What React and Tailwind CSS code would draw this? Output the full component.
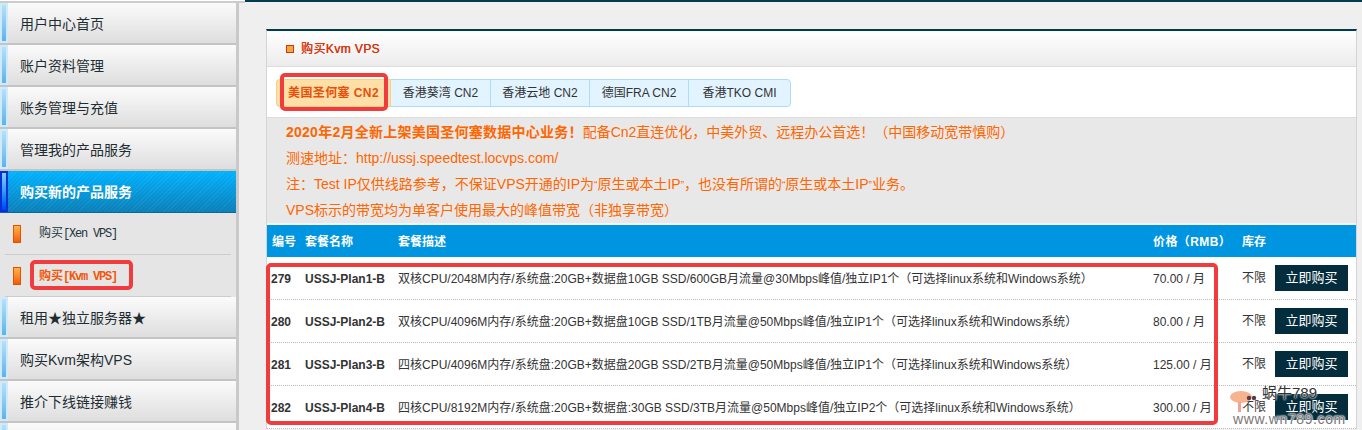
import React from 'react';

const font = "font-['Liberation_Sans','Noto_Sans_CJK_SC',sans-serif]";

const topMenu = ['用户中心首页', '账户资料管理', '账务管理与充值', '管理我的产品服务'];
const bottomMenu = ['租用★独立服务器★', '购买Kvm架构VPS', '推介下线链接赚钱', ''];

const tabs = [
  { label: '香港葵湾 CN2', width: 'w-[100px]' },
  { label: '香港云地 CN2', width: 'w-[99px]' },
  { label: '德国FRA CN2', width: 'w-[99px]' },
  { label: '香港TKO CMI', width: 'w-[101px]' },
];

const plans = [
  { id: 279, name: 'USSJ-Plan1-B', desc: '双核CPU/2048M内存/系统盘:20GB+数据盘10GB SSD/600GB月流量@30Mbps峰值/独立IP1个（可选择linux系统和Windows系统）', price: '70.00 / 月' },
  { id: 280, name: 'USSJ-Plan2-B', desc: '双核CPU/4096M内存/系统盘:20GB+数据盘10GB SSD/1TB月流量@50Mbps峰值/独立IP1个（可选择linux系统和Windows系统）', price: '80.00 / 月' },
  { id: 281, name: 'USSJ-Plan3-B', desc: '四核CPU/4096M内存/系统盘:20GB+数据盘20GB SSD/2TB月流量@50Mbps峰值/独立IP1个（可选择linux系统和Windows系统）', price: '125.00 / 月' },
  { id: 282, name: 'USSJ-Plan4-B', desc: '四核CPU/8192M内存/系统盘:20GB+数据盘:30GB SSD/3TB月流量@50Mbps峰值/独立IP2个（可选择linux系统和Windows系统）', price: '300.00 / 月' },
];

function MenuItem({ label, active }) {
  return (
    <div className={`flex items-center h-[42px] ${active ? 'bg-[repeating-linear-gradient(135deg,rgba(255,255,255,0.06)_0px,rgba(255,255,255,0.06)_1px,transparent_1px,transparent_3px),linear-gradient(to_bottom,#00b2ff,#0a7fb8)] border-b border-[#06689c]' : 'bg-gradient-to-b from-[#fbfbfb] to-[#dedede] border-b-2 border-[#c4c4c4]'}`}>
      <div className={`w-2 h-full shrink-0 border-2 ${active ? 'border-[#0a2fd8] bg-gradient-to-b from-[#7fd0f8] via-[#2f9df0] to-[#0a44ee]' : 'border-[#cfeafa] bg-gradient-to-b from-[#b5e1f8] to-[#5cb3ea]'}`} />
      <span className={`ml-3 text-sm ${active ? 'text-white font-bold' : 'pt-px text-[#1f2d33]'}`}>{label}</span>
    </div>
  );
}

function SubItem({ label, active }) {
  return (
    <div className="flex items-center h-[42px] mx-[5px] border-b border-[#cccccc]">
      <div className="ml-2 w-2 h-[18px] border border-[#e65100] bg-gradient-to-b from-[#ffb347] to-[#f25a00]" />
      <span className={`ml-[18px] text-xs ${active ? 'pt-px text-[#f4570a] font-bold' : 'text-[#26343a]'}`}>
        购买<span className="font-['Liberation_Mono',monospace] tracking-[-1.2px]">{label}</span>
      </span>
    </div>
  );
}

function Sidebar() {
  return (
    <aside className="w-[236px] shrink-0 h-full overflow-hidden bg-[#e5e5e5] border-r-[3px] border-[#c9c9c9] box-content">
      {topMenu.map(m => <MenuItem key={m} label={m} />)}
      <MenuItem label="购买新的产品服务" active />
      <SubItem label="[Xen VPS]" />
      <SubItem label="[Kvm VPS]" active />
      {bottomMenu.map((m, i) => <MenuItem key={i} label={m} />)}
    </aside>
  );
}

function PlanTable() {
  const cols = 'grid grid-cols-[38px_93px_755px_89px_33px_82px] items-center';
  return (
    <div>
      <div className={`${cols} h-[32px] pt-px bg-[#0095e0] text-white font-bold text-xs`}>
        <span className="pl-[5px]">编号</span>
        <span>套餐名称</span>
        <span>套餐描述</span>
        <span className="tracking-[0.4px]">价格（RMB）</span>
        <span>库存</span>
        <span />
      </div>
      {plans.map(p => (
        <div key={p.id} className={`${cols} h-[43px] bg-white border-b border-dotted border-[#bbbbbb] text-xs text-[#333333]`}>
          <span className="pl-[4px] pt-px font-bold">{p.id}</span>
          <span className="pt-px font-bold">{p.name}</span>
          <span className="pt-px whitespace-nowrap">{p.desc}</span>
          <span className="pt-px">{p.price}</span>
          <span>不限</span>
          <button className="w-[73px] h-[26px] bg-[#032c3c] text-white text-[13px]">立即购买</button>
        </div>
      ))}
    </div>
  );
}

function Quote({ children }) {
  return <span className="text-[10px] leading-none">{children}</span>;
}

export default function App() {
  return (
    <div className={`relative w-[1362px] h-[430px] overflow-hidden bg-[#efefef] ${font}`}>
      <div className="flex h-[3px]">
        <div className="w-[245px] bg-white border-b-2 border-[#cccccc]" />
        <div className="flex-1 h-[2px] bg-[#003c50]" />
      </div>
      <div className="flex h-[427px]">
        <Sidebar />
        <main className="flex-1 min-w-0 pl-[27px] pr-[5px] pt-[26px]">
          <div className="border-t-2 border-[#003c50] border-x border-x-[#d4d4d4] bg-white">
            <div className="flex items-center h-[36px] pl-[19px] gap-[7px] bg-gradient-to-b from-[#ffffff] to-[#ececec] border-b border-[#dddddd]">
              <span className="w-2 h-2 border border-[#d8340c] bg-[#f2a93b]" />
              <span className="text-xs tracking-[0.4px] text-[#d8340c] [text-shadow:0.3px_0_0_#d8340c]">购买Kvm VPS</span>
            </div>
            <div className="flex items-center h-[50px] pt-[2px] pl-[9px] bg-white">
              <div className="flex h-[28px] rounded border border-[#afdcf8] bg-[#e2f4ff] text-xs text-[#333333]">
                <span className="flex items-center justify-center w-[115px] -my-px -ml-px rounded-l bg-[#ffdfa8] border border-[#f8cf86] text-[#e8500a] font-bold tracking-[0.4px]">美国圣何塞 CN2</span>
                {tabs.map(t => (
                  <span key={t.label} className={`flex items-center justify-center ${t.width} border-r border-[#afdcf8] last:border-r-0`}>{t.label}</span>
                ))}
              </div>
            </div>
            <div className="h-[108px] pl-[19px] pt-px bg-[#e8e8e8] border-t border-[#dddddd] border-b-2 border-b-[#f5f5f5] text-sm leading-[26px] text-[#ff6600]">
              <p><b className="tracking-[0.25px]">2020年2月全新上架美国圣何塞数据中心业务！</b>配备Cn2直连优化，中美外贸、远程办公首选！（中国移动宽带慎购）</p>
              <p>测速地址：http://ussj.speedtest.locvps.com/</p>
              <p>注：Test IP仅供线路参考，不保证VPS开通的IP为<Quote>“</Quote>原生或本土IP<Quote>”</Quote>，也没有所谓的<Quote>“</Quote>原生或本土IP<Quote>”</Quote>业务。</p>
              <p>VPS标示的带宽均为单客户使用最大的峰值带宽（非独享带宽）</p>
            </div>
            <PlanTable />
          </div>
        </main>
      </div>

      {/* red annotation boxes */}
      <div className="absolute left-[280px] top-[73px] w-[108px] h-[38px] rounded-[5px] border-[4px] border-[#f03c3c]" />
      <div className="absolute left-[30px] top-[260px] w-[103px] h-[30px] rounded-[5px] border-[4px] border-[#f03c3c]" />
      <div className="absolute left-[266px] top-[263px] w-[952px] h-[162px] rounded-[5px] border-[4px] border-[#f03c3c]" />

      {/* watermark */}
      <div className="absolute left-[1229px] top-[385px] w-[125px] h-[45px] pointer-events-none">
        <svg width="30" height="26" viewBox="0 0 30 26" className="absolute left-0 top-[2px]">
          <ellipse cx="12" cy="10" rx="11" ry="6" fill="#f6b48e" />
          <circle cx="20" cy="11" r="2.2" fill="#5b3a4a" />
          <circle cx="25" cy="11" r="2.2" fill="#5b3a4a" />
          <rect x="9" y="15" width="3" height="10" fill="#f2a0a0" />
        </svg>
        <span className="absolute left-[33px] top-[-2px] text-[15px] leading-5 text-[#333333] [text-shadow:0_0_2px_#ffffff,0_0_2px_#ffffff]">蜗牛789</span>
        <span className="absolute left-[4px] top-[24px] text-[14px] leading-5 tracking-[0.6px] text-[#777777] [text-shadow:0_0_2px_#ffffff,0_0_2px_#ffffff,0_0_2px_#ffffff]">www.wn789.com</span>
      </div>
    </div>
  );
}
